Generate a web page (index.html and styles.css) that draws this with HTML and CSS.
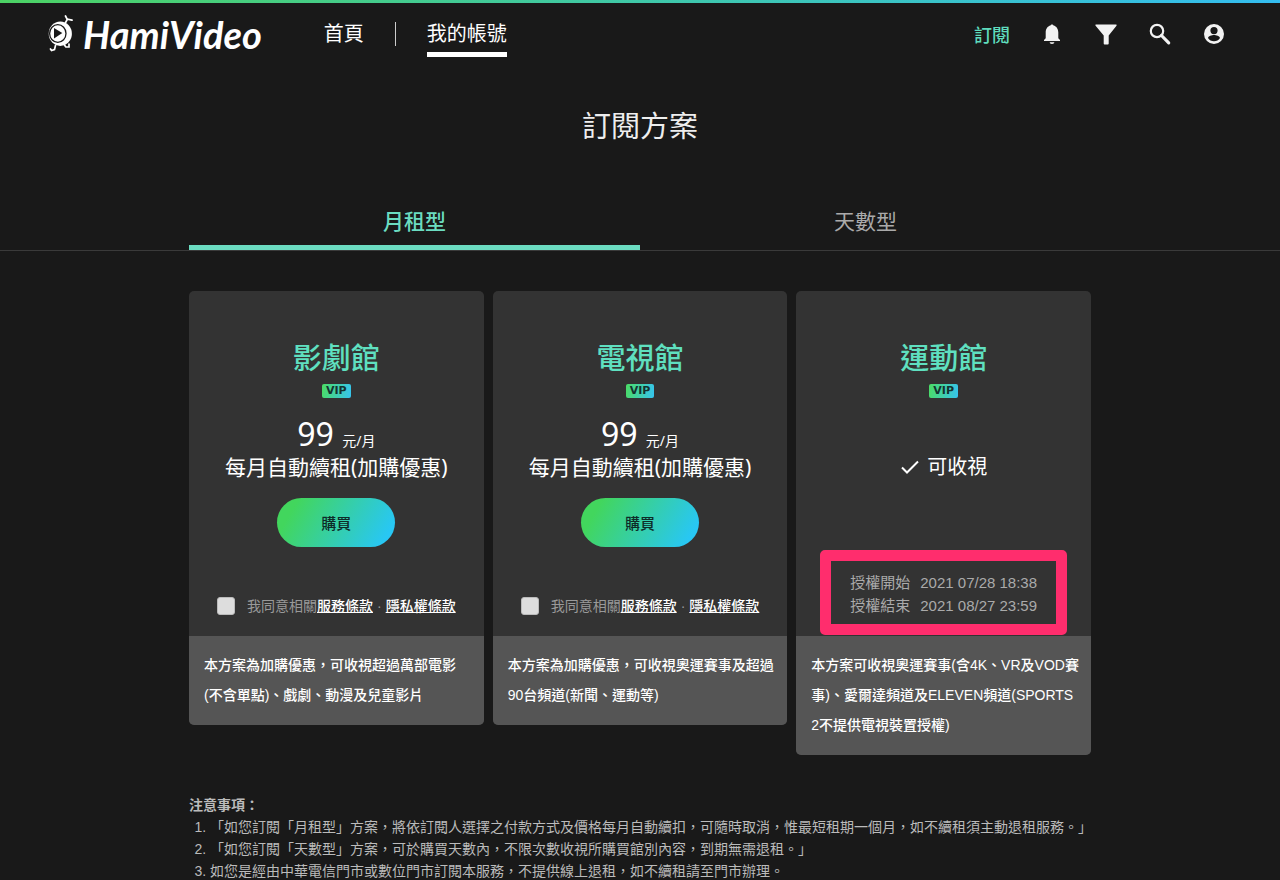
FILE: index.html
```html
<!DOCTYPE html>
<html lang="zh-Hant">
<head>
<meta charset="utf-8">
<meta name="viewport" content="width=device-width, initial-scale=1">
<title>Hami Video</title>
<link rel="stylesheet" href="styles.css">
</head>
<body>
<header class="topbar">
  <a class="logo" href="#" aria-label="HamiVideo">
    <svg class="logo-mark" viewBox="0 0 28 38" aria-hidden="true">
      <ellipse cx="13.300" cy="18.700" rx="11.600" ry="12.200" fill="#fff"/>
      <ellipse cx="10.800" cy="18.500" rx="8.200" ry="8.800" fill="none" stroke="#191919" stroke-width="1.300"/>
      <path fill="#191919" d="M7 13L15.300 18L7 23.500Z"/>
      <path fill="none" stroke="#fff" stroke-width="1.700" stroke-linecap="round" d="M18.300 8L20.500 4M18.500 1L20 4L25 5.200M8.500 30.500L7.500 34.500L4.500 35.500L3.500 34M17.500 30L18.500 31.500M22 29V32H19"/>
    </svg>
    <span class="logo-text">HamiVideo</span>
  </a>
  <nav class="nav">
    <a class="nav-link" href="#">首頁</a>
    <span class="nav-divider"></span>
    <a class="nav-link nav-link-active" href="#">我的帳號</a>
  </nav>
  <div class="tools">
    <a class="subscribe" href="#">訂閱</a>
    <button class="icon-button" type="button" aria-label="通知"><svg viewBox="0 0 24 24"><path d="M12 22c1.400 0 2.300-.7 2.300-1.700H9.700C9.700 21.300 10.600 22 12 22zM18.300 16.200V10.500c0-3.500-1.800-6.300-4.800-7C13.200 2.700 12.800 2.400 12 2.400s-1.200.3-1.500 1.100c-3 .7-4.800 3.500-4.800 7v5.700L4 18v1h16v-1z"/></svg></button>
    <button class="icon-button" type="button" aria-label="篩選"><svg viewBox="0 0 24 24"><path d="M2 2.500h20c.6 0 .8.7.5 1.200L14.700 13.500v8c0 .6-.3.900-.9.900h-3.200c-.6 0-.9-.3-.9-.9v-8L1.600 3.700C1.200 3.200 1.400 2.500 2 2.500z"/></svg></button>
    <button class="icon-button" type="button" aria-label="搜尋"><svg viewBox="0 0 24 24"><circle cx="9" cy="9" r="6.200" fill="none" stroke="#f2f2f2" stroke-width="2.200"/><path d="M13.500 13.500L20.700 20.900" stroke="#f2f2f2" stroke-width="3.200" stroke-linecap="round"/></svg></button>
    <button class="icon-button" type="button" aria-label="帳號"><svg viewBox="0 0 24 24"><path fill-rule="evenodd" d="M12 2a10 10 0 1 0 0 20a10 10 0 0 0 0-20zM12 5a3.600 3.600 0 1 1 0 7.200A3.600 3.600 0 0 1 12 5zM12 19.200a7.200 7.200 0 0 1-6-3.200c0-2 4-3.100 6-3.100s6 1.100 6 3.100a7.200 7.200 0 0 1-6 3.200z"/></svg></button>
  </div>
</header>

<main>
  <h1 class="page-title">訂閱方案</h1>
  <div class="tabs-bar">
    <div class="tabs" role="tablist">
      <button class="tab tab-active" type="button" role="tab" aria-selected="true">月租型</button>
      <button class="tab" type="button" role="tab" aria-selected="false">天數型</button>
    </div>
  </div>

  <div class="container">
    <section class="plans">
      <article class="plan">
        <div class="plan-main">
          <h2 class="plan-name">影劇館</h2>
          <span class="vip">VIP</span>
          <p class="price">99 <small class="unit">元/月</small></p>
          <p class="renewal">每月自動續租(加購優惠)</p>
          <button class="buy" type="button">購買</button>
          <div class="consent">
            <input class="check" type="checkbox" id="agree-drama">
            <span><label for="agree-drama">我同意相關</label><a href="#">服務條款</a><span class="dot">·</span><a href="#">隱私權條款</a></span>
          </div>
        </div>
        <p class="plan-info">本方案為加購優惠，可收視超過萬部電影(不含單點)、戲劇、動漫及兒童影片</p>
      </article>
      <article class="plan">
        <div class="plan-main">
          <h2 class="plan-name">電視館</h2>
          <span class="vip">VIP</span>
          <p class="price">99 <small class="unit">元/月</small></p>
          <p class="renewal">每月自動續租(加購優惠)</p>
          <button class="buy" type="button">購買</button>
          <div class="consent">
            <input class="check" type="checkbox" id="agree-tv">
            <span><label for="agree-tv">我同意相關</label><a href="#">服務條款</a><span class="dot">·</span><a href="#">隱私權條款</a></span>
          </div>
        </div>
        <p class="plan-info">本方案為加購優惠，可收視奧運賽事及超過90台頻道(新聞、運動等)</p>
      </article>
      <article class="plan">
        <div class="plan-main">
          <h2 class="plan-name">運動館</h2>
          <span class="vip">VIP</span>
          <p class="status"><svg class="tick" viewBox="0 0 20 16" aria-hidden="true"><path d="M2 8.500L7 13.500L18 2.500" fill="none" stroke="#fff" stroke-width="2"/></svg>可收視</p>
          <dl class="license">
            <dt>授權開始</dt><dd>2021 07/28 18:38</dd>
            <dt>授權結束</dt><dd>2021 08/27 23:59</dd>
          </dl>
        </div>
        <p class="plan-info">本方案可收視奧運賽事(含4K、VR及VOD賽事)、愛爾達頻道及ELEVEN頻道(SPORTS 2不提供電視裝置授權)</p>
      </article>
    </section>

    <section class="notes">
      <h3 class="notes-title">注意事項：</h3>
      <ol class="notes-list">
        <li>「如您訂閱「月租型」方案，將依訂閱人選擇之付款方式及價格每月自動續扣，可隨時取消，惟最短租期一個月，如不續租須主動退租服務。」</li>
        <li>「如您訂閱「天數型」方案，可於購買天數內，不限次數收視所購買館別內容，到期無需退租。」</li>
        <li>如您是經由中華電信門市或數位門市訂閱本服務，不提供線上退租，如不續租請至門市辦理。</li>
      </ol>
    </section>
  </div>
</main>
</body>
</html>
```
FILE: styles.css
```css
* {
  box-sizing: border-box;
}

body {
  margin: 0;
  background: #191919;
  color: #fff;
  font-family: "Liberation Sans", "Noto Sans CJK TC", sans-serif;
  font-size: 14px;
}

h1, h2, h3, p, dl, dd, ol {
  margin: 0;
}

a {
  color: inherit;
}

button {
  padding: 0;
  border: 0;
  background: none;
  color: inherit;
  font: inherit;
  cursor: pointer;
}

.topbar {
  display: flex;
  align-items: center;
  height: 64px;
  padding: 0 54px 0 47px;
  border-top: 3px solid;
  border-image: linear-gradient(90deg, #4cd264, #3fc8a8 50%, #34bdf0) 1;
}

.logo {
  display: flex;
  align-items: center;
  gap: 8px;
  text-decoration: none;
}

.logo-mark {
  width: 28px;
  height: 38px;
}

.logo-text {
  font: italic 700 38px/44px Lato, sans-serif;
}

.nav {
  display: flex;
  align-items: center;
  gap: 31px;
  margin-left: 62px;
}

.nav-link {
  padding-top: 5px;
  border-bottom: 5px solid transparent;
  font-size: 20px;
  line-height: 36px;
  text-decoration: none;
}

.nav-link-active {
  border-color: #fff;
}

.nav-divider {
  width: 1px;
  height: 24px;
  background: #ccc;
}

.tools {
  display: flex;
  align-items: center;
  gap: 30px;
  margin-left: auto;
}

.subscribe {
  color: #5fdcbd;
  font-size: 18px;
  font-weight: 500;
  text-decoration: none;
}

.icon-button {
  width: 24px;
  height: 24px;
}

.icon-button svg {
  display: block;
  fill: #f2f2f2;
}

.page-title {
  padding-top: 41px;
  font-size: 29px;
  font-weight: 400;
  line-height: 44px;
  text-align: center;
  color: #eee;
}

.tabs-bar {
  margin-top: 43px;
  border-bottom: 1px solid #3a3a3a;
}

.tabs,
.container {
  width: 100%;
  max-width: 902px;
  margin: 0 auto;
}

.tabs {
  display: flex;
}

.tab {
  flex: 1;
  height: 58px;
  padding-top: 2px;
  border-bottom: 5px solid transparent;
  color: #aaa;
  font-size: 21px;
}

.tab-active {
  border-color: #6bdcc1;
  color: #6bdcc1;
  font-weight: 500;
}

.plans {
  display: grid;
  grid-template-columns: repeat(3, 1fr);
  align-items: start;
  gap: 9px;
  margin-top: 40px;
}

.plan {
  overflow: hidden;
  border-radius: 5px;
  background: #333;
}

.plan-main {
  display: flex;
  flex-direction: column;
  align-items: center;
  min-height: 345px;
  padding-top: 46px;
}

.plan-name {
  color: #5fe0c0;
  font-size: 29px;
  font-weight: 500;
  line-height: 44px;
}

.vip {
  margin-top: 3px;
  padding: 0 4px;
  border-radius: 2px;
  background: linear-gradient(100deg, #4bdc64, #36c4f0);
  color: #14332f;
  font: 700 11px/14px "DejaVu Sans", sans-serif;
}

.price {
  margin-top: 16px;
  font: 400 32px/40px "Noto Sans", "Noto Sans CJK TC", sans-serif;
}

.unit {
  font-size: 14px;
  line-height: 1;
}

.renewal,
.status {
  font-family: "Noto Sans", "Noto Sans CJK TC", sans-serif;
  font-size: 20px;
  line-height: 26px;
}

.renewal {
  font-size: 21px;
}

.status {
  display: flex;
  align-items: center;
  gap: 7px;
  margin-top: 56px;
}

.tick {
  width: 20px;
  height: 16px;
}

.buy {
  width: 118px;
  height: 49px;
  margin-top: 18px;
  border-radius: 25px;
  background: linear-gradient(120deg, #42d65d 15%, #28c7f4 90%);
  color: #0d2b28;
  font-size: 15px;
  font-weight: 500;
}

.consent {
  display: flex;
  align-items: center;
  gap: 12px;
  margin-top: auto;
  padding-bottom: 19px;
  color: #999;
  line-height: 22px;
}

.consent a {
  color: #fff;
  font-weight: 500;
}

.dot {
  padding: 0 4px;
}

.check {
  width: 18px;
  height: 18px;
  margin: 0;
  border: 1px solid #bbb;
  border-radius: 3px;
  background: #ddd;
  appearance: none;
}

.check:checked {
  background: #5fdcbd;
}

.license {
  display: grid;
  grid-template-columns: auto auto;
  column-gap: 10px;
  margin: auto 0 1px;
  padding: 10px 19px 7px;
  border: 11px solid #ff2d6d;
  border-radius: 5px;
  color: #aaa;
  font-size: 15px;
  line-height: 23px;
}

.plan-info {
  padding: 14px 12px 15px 15px;
  background: #555;
  font-weight: 500;
  line-height: 30px;
}

.notes {
  margin-top: 39px;
  color: #bbb;
  line-height: 22px;
}

.notes-title {
  font-size: 14px;
}

.notes-list {
  padding-left: 21px;
}
```
